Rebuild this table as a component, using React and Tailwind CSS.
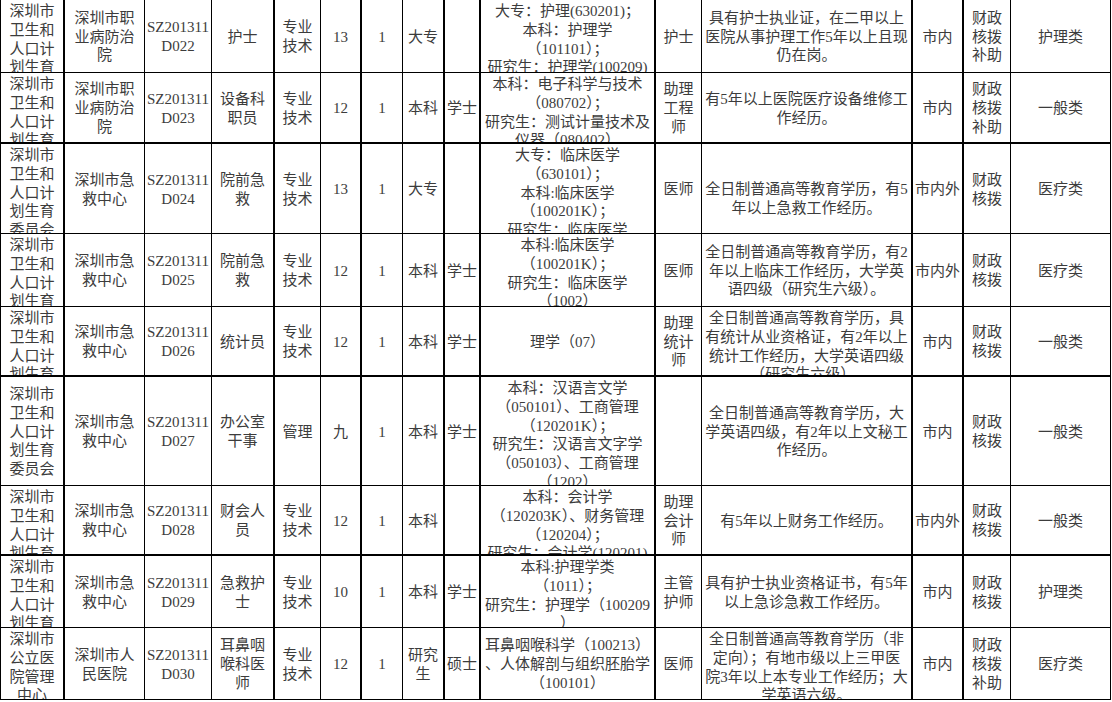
import React from "react";

// column right-border and row bottom-border weights (spreadsheet style)
const colLine = [2, 1, 1, 2, 1, 2, 1, 2, 2, 2, 1, 2, 2, 1, 1];
const rowLine = [1, 2, 1, 1, 2, 1, 2, 1, 1];

const R = { 1: "border-r", 2: "border-r-2" };
const B = { 1: "border-b", 2: "border-b-2" };

// the fifth line only shows where the row is tall enough
const WSJ = "深圳市|卫生和|人口计|划生育";
const WSJ5 = "深圳市|卫生和|人口计|划生育|委员会";

const rows = [
  [WSJ, "深圳市职|业病防治|院", "SZ201311|D022", "护士", "专业|技术", "13", "1", "大专", "",
    "大专：护理(630201)；|本科：护理学|（101101）；|研究生：护理学(100209)",
    "护士", "具有护士执业证，在二甲以上|医院从事护理工作5年以上且现|仍在岗。", "市内", "财政|核拨|补助", "护理类"],
  [WSJ, "深圳市职|业病防治|院", "SZ201311|D023", "设备科|职员", "专业|技术", "12", "1", "本科", "学士",
    "本科：电子科学与技术|（080702）；|研究生：测试计量技术及|仪器（080402）",
    "助理|工程|师", "有5年以上医院医疗设备维修工|作经历。", "市内", "财政|核拨|补助", "一般类"],
  [WSJ5, "深圳市急|救中心", "SZ201311|D024", "院前急|救", "专业|技术", "13", "1", "大专", "",
    "大专：临床医学|（630101）；|本科:临床医学|（100201K）；|研究生：临床医学",
    "医师", " |全日制普通高等教育学历，有5|年以上急救工作经历。", "市内外", "财政|核拨", "医疗类"],
  [WSJ, "深圳市急|救中心", "SZ201311|D025", "院前急|救", "专业|技术", "12", "1", "本科", "学士",
    "本科:临床医学|（100201K）；|研究生：临床医学|（1002）",
    "医师", "全日制普通高等教育学历，有2|年以上临床工作经历，大学英|语四级（研究生六级）。", "市内外", "财政|核拨", "医疗类"],
  [WSJ, "深圳市急|救中心", "SZ201311|D026", "统计员", "专业|技术", "12", "1", "本科", "学士",
    "理学（07）",
    "助理|统计|师", "全日制普通高等教育学历，具|有统计从业资格证，有2年以上|统计工作经历，大学英语四级|（研究生六级）。", "市内", "财政|核拨", "一般类"],
  [WSJ5, "深圳市急|救中心", "SZ201311|D027", "办公室|干事", "管理", "九", "1", "本科", "学士",
    "本科：汉语言文学|（050101）、工商管理|（120201K）；|研究生：汉语言文字学|（050103）、工商管理|（1202）",
    "", "全日制普通高等教育学历，大|学英语四级，有2年以上文秘工|作经历。", "市内", "财政|核拨", "一般类"],
  [WSJ, "深圳市急|救中心", "SZ201311|D028", "财会人|员", "专业|技术", "12", "1", "本科", "",
    "本科：会计学|（120203K）、财务管理|（120204）；|研究生：会计学(120201)",
    "助理|会计|师", "有5年以上财务工作经历。", "市内外", "财政|核拨", "一般类"],
  [WSJ, "深圳市急|救中心", "SZ201311|D029", "急救护|士", "专业|技术", "10", "1", "本科", "学士",
    "本科:护理学类|（1011）；|研究生：护理学（100209|）",
    "主管|护师", "具有护士执业资格证书，有5年|以上急诊急救工作经历。", "市内", "财政|核拨", "护理类"],
  ["深圳市|公立医|院管理|中心", "深圳市人|民医院", "SZ201311|D030", "耳鼻咽|喉科医|师", "专业|技术", "12", "1", "研究|生", "硕士",
    "耳鼻咽喉科学（100213）|、人体解剖与组织胚胎学|（100101）",
    "医师", "全日制普通高等教育学历（非|定向）；有地市级以上三甲医|院3年以上本专业工作经历；大|学英语六级。", "市内", "财政|核拨|补助", "医疗类"],
];

function Cell({ text, r, c }) {
  const lines = text ? text.split("|") : [];
  return (
    <div
      className={`flex flex-col items-center [justify-content:safe_center] overflow-hidden border-black pt-0.5 text-center ${R[colLine[c]]} ${B[rowLine[r]]} ${c === 0 ? "border-l" : ""}`}
    >
      {lines.map((l, i) => (
        <div key={i} className="whitespace-pre">
          {l}
        </div>
      ))}
    </div>
  );
}

export default function App() {
  return (
    <div className="w-[1112px] h-[702px] overflow-hidden bg-white">
      <div className="grid grid-cols-[65px_80px_67px_63px_46px_41px_41px_42px_36px_175px_46px_211px_51px_47px_100px] grid-rows-[73px_71px_90px_73px_70px_109px_70px_72px_72px] font-['Liberation_Serif','Noto_Sans_CJK_SC',serif] text-[15px] leading-[18.75px] text-[#3c3c3c]">
        {rows.map((row, r) =>
          row.map((t, c) => <Cell key={`${r}-${c}`} text={t} r={r} c={c} />)
        )}
      </div>
    </div>
  );
}
